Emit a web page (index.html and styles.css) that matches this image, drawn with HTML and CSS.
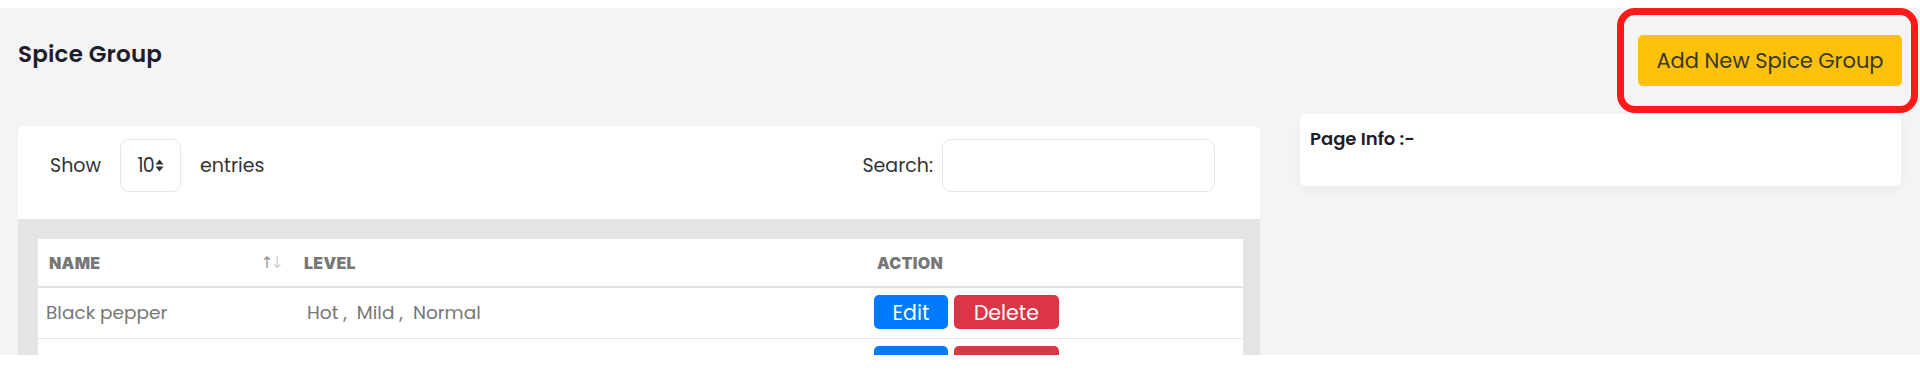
FILE: index.html
```html
<!DOCTYPE html>
<html lang="en">
<head>
    <meta charset="UTF-8">
    <meta name="viewport" content="width=device-width, initial-scale=1.0">
    <title>Spice Group</title>
    <link rel="stylesheet" href="styles.css">
</head>
<body>
    <div class="page">
        <div class="main">
            <div class="left-col">
                <div class="title-row">
                    <h1>Spice Group</h1>
                </div>

                <div class="card">
                    <div class="controls">
                        <div class="length">
                            <span>Show</span>
                            <div class="select">
                                <span>10</span>
                                <svg width="9" height="13" viewBox="0 0 9 13">
                                    <path d="M4.5 0.5 L8.5 5.5 L0.5 5.5 Z" fill="#333"/>
                                    <path d="M4.5 12.5 L8.5 7.5 L0.5 7.5 Z" fill="#333"/>
                                </svg>
                            </div>
                            <span>entries</span>
                        </div>
                        <div class="search">
                            <label for="search">Search:</label>
                            <input type="text" id="search">
                        </div>
                    </div>

                    <div class="table-wrap">
                        <table class="data-table">
                            <thead>
                                <tr>
                                    <th class="col-name">
                                        <div class="th-inner">
                                            <span>NAME</span>
                                            <span class="sort"><span class="up">↑</span><span class="down">↓</span></span>
                                        </div>
                                    </th>
                                    <th class="col-level">LEVEL</th>
                                    <th class="col-action">ACTION</th>
                                </tr>
                            </thead>
                            <tbody>
                                <tr>
                                    <td>Black pepper</td>
                                    <td class="levels">Hot ,&nbsp; Mild ,&nbsp; Normal</td>
                                    <td>
                                        <button class="btn btn-edit">Edit</button>
                                        <button class="btn btn-delete">Delete</button>
                                    </td>
                                </tr>
                                <tr>
                                    <td>Red chilli</td>
                                    <td class="levels">Hot ,&nbsp; Mild ,&nbsp; Normal ,&nbsp; Extra Hot</td>
                                    <td>
                                        <button class="btn btn-edit">Edit</button>
                                        <button class="btn btn-delete">Delete</button>
                                    </td>
                                </tr>
                            </tbody>
                        </table>
                    </div>
                </div>
            </div>

            <div class="right-col">
                <div class="add-row">
                    <div class="add-wrap">
                        <button class="btn-add">Add New Spice Group</button>
                        <span class="highlight"></span>
                    </div>
                </div>
                <div class="info-card">
                    <h3>Page Info :-</h3>
                </div>
            </div>
        </div>
    </div>
</body>
</html>
```

FILE: styles.css
```css
* {
    margin: 0;
    padding: 0;
    box-sizing: border-box;
}

body {
    font-family: "Poppins", "Inter", sans-serif;
    background: #fff;
    color: #333;
}

.page {
    padding-top: 8px;
    height: 388px;
}

.main {
    background: #f4f4f4;
    height: 347px;
    overflow: hidden;
    display: grid;
    grid-template-columns: 1242px 601px;
    column-gap: 40px;
    padding: 0 19px 0 18px;
}

/* left column */
.title-row {
    height: 118px;
    padding-top: 29px;
}

.title-row h1 {
    font-size: 23px;
    font-weight: 600;
    color: #1e1e2a;
    letter-spacing: 0.2px;
}

.card {
    background: #fff;
    border-radius: 6px 6px 0 0;
}

.controls {
    display: flex;
    justify-content: space-between;
    align-items: center;
    padding: 13px 45px 27px 32px;
    font-size: 19px;
    color: #333;
}

.length {
    display: flex;
    align-items: center;
    gap: 19px;
}

.select {
    width: 61px;
    height: 53px;
    border: 1px solid #e9e7e1;
    border-radius: 9px;
    display: flex;
    align-items: center;
    justify-content: center;
    gap: 1px;
    font-size: 19px;
    letter-spacing: -1px;
}

.search {
    display: flex;
    align-items: center;
    gap: 9px;
}

.search input {
    width: 273px;
    height: 53px;
    border: 1px solid #e9e7e1;
    border-radius: 9px;
    outline: none;
}

.table-wrap {
    background: #e4e4e4;
    padding: 20px 17px 0 20px;
    height: 200px;
}

.data-table {
    width: 100%;
    background: #fff;
    border-collapse: collapse;
    table-layout: fixed;
}

.col-name { width: 255px; }
.col-level { width: 573px; }

.data-table th {
    text-align: left;
    font-family: "Inter", sans-serif;
    font-weight: 900;
    font-size: 16px;
    color: #777;
    padding: 0 10px 0 11px;
    height: 48px;
    border-bottom: 2px solid #dfe3e8;
    letter-spacing: 0.3px;
}

.th-inner {
    display: flex;
    justify-content: space-between;
    align-items: center;
}

.sort {
    font-family: "DejaVu Sans", sans-serif;
    font-weight: 400;
    font-size: 16px;
    letter-spacing: -3px;
    margin-right: 2px;
}

.sort .up { color: #999; }
.sort .down { color: #d4d4d4; }

.data-table td {
    font-size: 18.5px;
    color: #777;
    padding: 7px 10px 8px 8px;
    height: 51px;
    border-bottom: 1px solid #e3e6ea;
    white-space: nowrap;
}

.data-table td.levels {
    padding-left: 14px;
}

.btn {
    border: none;
    border-radius: 5px;
    color: #fff;
    font-family: inherit;
    font-size: 20.5px;
    height: 34px;
    cursor: pointer;
}

.btn-edit {
    background: #007bff;
    width: 74px;
}

.btn-delete {
    background: #dc3545;
    width: 105px;
    margin-left: 1px;
}

/* right column */
.add-row {
    display: flex;
    justify-content: flex-end;
    padding-top: 27px;
}

.add-wrap {
    position: relative;
    margin-right: -1px;
}

.btn-add {
    width: 264px;
    height: 51px;
    background: #fcc10b;
    border: none;
    border-radius: 5px;
    font-family: inherit;
    font-size: 21px;
    color: #3a3826;
    cursor: pointer;
}

.highlight {
    position: absolute;
    top: -27px;
    bottom: -27px;
    left: -21px;
    right: -16px;
    border: 7px solid #ff1a1a;
    border-radius: 18px;
}

.info-card {
    margin-top: 28px;
    height: 72px;
    background: #fff;
    border-radius: 6px;
    padding: 11px 10px;
    box-shadow: 0 4px 12px rgba(0, 0, 0, 0.04);
}

.info-card h3 {
    font-size: 18px;
    font-weight: 600;
    color: #1e1e2a;
}
```
